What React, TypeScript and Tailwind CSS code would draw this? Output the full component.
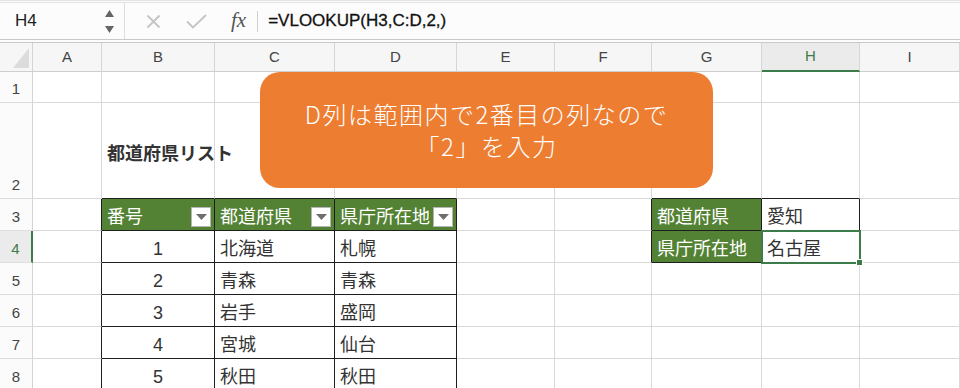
import React from 'react';
import clsx from 'clsx';

const COLS = ['A', 'B', 'C', 'D', 'E', 'F', 'G', 'H', 'I'];
const ROWS = [1, 2, 3, 4, 5, 6, 7, 8];

type Kind = 'title' | 'head' | 'label' | 'num' | 'text';

interface Cell {
  text: string;
  kind: Kind;
  filter?: boolean;
  selected?: boolean;
}

const prefectures = [
  ['1', '北海道', '札幌'],
  ['2', '青森', '青森'],
  ['3', '岩手', '盛岡'],
  ['4', '宮城', '仙台'],
  ['5', '秋田', '秋田'],
];

const cells: Record<string, Cell> = {
  B2: { text: '都道府県リスト', kind: 'title' },
  B3: { text: '番号', kind: 'head', filter: true },
  C3: { text: '都道府県', kind: 'head', filter: true },
  D3: { text: '県庁所在地', kind: 'head', filter: true },
  G3: { text: '都道府県', kind: 'label' },
  H3: { text: '愛知', kind: 'text' },
  G4: { text: '県庁所在地', kind: 'label' },
  H4: { text: '名古屋', kind: 'text', selected: true },
};
prefectures.forEach(([n, pref, city], i) => {
  const r = i + 4;
  cells[`B${r}`] = { text: n, kind: 'num' };
  cells[`C${r}`] = { text: pref, kind: 'text' };
  cells[`D${r}`] = { text: city, kind: 'text' };
});

// which cell edges belong to the bordered tables
function blackRight(c: number, r: number) {
  if (r >= 3 && c >= 0 && c <= 3) return true;
  if ((r === 3 || r === 4) && c >= 5 && c <= 7) return true;
  return false;
}
function blackBottom(c: number, r: number) {
  if (r >= 2 && c >= 1 && c <= 3) return true;
  if (r >= 2 && r <= 4 && (c === 6 || c === 7)) return true;
  return false;
}

function FilterButton() {
  return (
    <div className="absolute right-[3px] bottom-[3px] flex h-[20px] w-[20px] items-center justify-center border border-[#b5b5b5] bg-white">
      <svg width="11" height="6" viewBox="0 0 11 6">
        <path d="M0 0 L11 0 L5.5 6 Z" fill="#6e6e6e" />
      </svg>
    </div>
  );
}

function FormulaBar() {
  return (
    <div className="flex h-[43px] border-t-[3px] border-b-[4px] border-t-[#e4e4e4] border-b-[#c9c9c9] border-double bg-[#fcfcfc]">
      <div className="flex w-[125px] items-center justify-between border-r border-[#dddddd] pl-[15px] pr-[10px]">
        <span className="text-[17px] text-[#222]">H4</span>
        <div className="flex flex-col gap-[9px]">
          <svg width="9" height="7" viewBox="0 0 9 7">
            <path d="M4.5 0 L9 7 L0 7 Z" fill="#666" />
          </svg>
          <svg width="9" height="7" viewBox="0 0 9 7">
            <path d="M0 0 L9 0 L4.5 7 Z" fill="#666" />
          </svg>
        </div>
      </div>
      <div className="flex items-center pl-[21px]">
        <svg width="15" height="15" viewBox="0 0 15 15">
          <path d="M1.5 1.5 L13.5 13.5 M13.5 1.5 L1.5 13.5" stroke="#c4c4c4" strokeWidth="1.8" />
        </svg>
        <svg className="ml-[25px]" width="21" height="15" viewBox="0 0 21 15">
          <path d="M1 7.5 L7 13.5 L20 1" stroke="#c4c4c4" strokeWidth="1.8" fill="none" />
        </svg>
        <span className="ml-[24px] font-['Liberation_Serif',serif] text-[21px] italic text-[#555]">fx</span>
        <div className="ml-[11px] h-[21px] w-px bg-[#d0d0d0]" />
        <span className="ml-[10px] text-[17px] text-[#111] [-webkit-text-stroke:0.3px_#111]">=VLOOKUP(H3,C:D,2,)</span>
      </div>
    </div>
  );
}

function CellBox({ c, r }: { c: number; r: number }) {
  const key = `${COLS[c]}${r}`;
  const cell = cells[key];
  const green = cell && (cell.kind === 'head' || cell.kind === 'label');
  return (
    <div
      className={clsx(
        'relative flex min-w-0 border-r border-b',
        blackRight(c, r) ? 'border-r-[#1e1e1e]' : 'border-r-[#d9d9d9]',
        blackBottom(c, r) ? 'border-b-[#1e1e1e]' : 'border-b-[#d9d9d9]',
        green && 'bg-[#548235]',
        cell?.kind === 'title' ? 'items-center pt-[6px]' : 'items-center pt-[4px]',
        cell?.kind === 'num' ? 'justify-center' : 'pl-[5px]',
        cell?.selected && 'z-10'
      )}
    >
      {cell && (
        <span
          className={clsx(
            'whitespace-nowrap text-[18px] leading-[24px]',
            green ? 'text-white' : 'text-[#333]',
            cell.kind === 'title' && 'font-bold text-[#111]'
          )}
        >
          {cell.text}
        </span>
      )}
      {cell?.filter && <FilterButton />}
      {cell?.selected && (
        <div className="absolute -top-[1px] -left-[1px] -right-[2px] -bottom-[2px] border-2 border-[#3e7b4a]">
          <div className="absolute -right-[4px] -bottom-[4px] h-[7px] w-[7px] border border-white bg-[#3e7b4a]" />
        </div>
      )}
    </div>
  );
}

export default function App() {
  return (
    <div className="relative h-[388px] w-[960px] overflow-hidden bg-white font-['Liberation_Sans','Noto_Sans_CJK_JP',sans-serif]">
      <FormulaBar />
      <div className="grid grid-cols-[33px_69px_113px_120px_122px_98px_97px_110px_98px_1fr] grid-rows-[29px_31px_96px_32px_32px_32px_32px_32px_32px]">
        <div className="flex items-end justify-end border-r border-b border-r-[#d4d4d4] border-b-[#cfcfcf] bg-[#f6f6f6] pr-[3px] pb-[3px]">
          <svg width="16" height="20" viewBox="0 0 16 20">
            <path d="M16 0 L16 20 L0 20 Z" fill="#dcdcdc" />
          </svg>
        </div>
        {COLS.map((col) => (
          <div
            key={col}
            className={clsx(
              'flex items-center justify-center border-r border-r-[#d6d6d6] text-[15px]',
              col === 'H'
                ? 'border-b-2 border-b-[#3e7b4a] bg-[#ebebeb] text-[#3e7b4a]'
                : 'border-b border-b-[#cfcfcf] bg-[#f6f6f6] text-[#444]'
            )}
          >
            {col}
          </div>
        ))}
        {ROWS.map((r) => (
          <React.Fragment key={r}>
            <div
              className={clsx(
                'flex items-end justify-center border-b border-b-[#dedede] pb-[4px] text-[15px] leading-[18px]',
                r === 4
                  ? 'border-r-2 border-r-[#3e7b4a] bg-[#ebebeb] text-[#3e7b4a]'
                  : 'border-r border-r-[#d4d4d4] bg-[#fbfbfb] text-[#444]'
              )}
            >
              {r}
            </div>
            {COLS.map((_, c) => (
              <CellBox key={c} c={c} r={r} />
            ))}
          </React.Fragment>
        ))}
      </div>
      <div className="absolute left-[260px] top-[72px] z-20 flex h-[116px] w-[453px] flex-col items-center justify-center rounded-[20px] bg-[#ed7d31] font-['Noto_Sans_CJK_JP',sans-serif] text-[24px] font-light leading-[32px] tracking-[1.5px] text-white">
        <span>D列は範囲内で2番目の列なので</span>
        <span>「2」を入力</span>
      </div>
    </div>
  );
}
